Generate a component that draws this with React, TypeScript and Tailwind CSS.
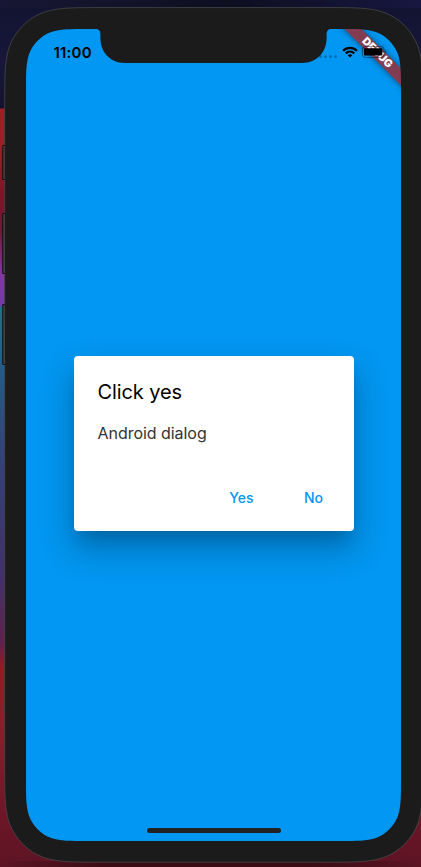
function smoothRect(x: number, y: number, w: number, h: number, r: number): string {
  const corner = (cx: number, cy: number, ax: number, ay: number, bx: number, by: number) => {
    const p = (a: number, b: number) => `${cx + ax * a * r + bx * b * r} ${cy + ay * a * r + by * b * r}`;
    return (
      `L${p(1.52866, 0)} C${p(1.08849, 0)} ${p(0.86841, 0)} ${p(0.63149, 0.07491)} ` +
      `C${p(0.37282, 0.16906)} ${p(0.16906, 0.37282)} ${p(0.07491, 0.63149)} ` +
      `C${p(0, 0.86841)} ${p(0, 1.08849)} ${p(0, 1.52866)} `
    );
  };
  return (
    `M${x + w / 2} ${y} ` +
    corner(x + w, y, -1, 0, 0, 1) +
    corner(x + w, y + h, 0, -1, -1, 0) +
    corner(x, y + h, 1, 0, 0, -1) +
    corner(x, y, 0, 1, 1, 0) +
    "Z"
  );
}

const BODY = smoothRect(4.7, 7.6, 418, 854.6, 62);
const SCREEN = smoothRect(26, 29, 375, 812, 40);
const NOTCH =
  "M94 28 V29 H95.5 C99 29 100.4 31 100.4 34.5 V38 C100.4 52 110 63 125 63 H302 C317 63 326.6 52 326.6 38 V34.5 C326.6 31 328 29 331.5 29 H333 V28 Z";

function Bezel() {
  return (
    <svg className="pointer-events-none absolute inset-0" width="421" height="867" viewBox="0 0 421 867">
      <path d={BODY + SCREEN} fill="#1b1b1b" fillRule="evenodd" />
      <path d={NOTCH} fill="#1b1b1b" />
      <path d={BODY} fill="none" stroke="#48484a" strokeWidth="0.8" />
      {[[145, 35], [213, 61], [304, 61]].map(([y, h]) => (
        <g key={y}>
          <rect x="2.2" y={y} width="3" height={h} rx="1" fill="#111111" />
          <rect x="3.4" y={y + 1} width="1.4" height={h - 2} fill="#4b4b4c" />
        </g>
      ))}
    </svg>
  );
}

function Wifi() {
  return (
    <svg width="16" height="12" viewBox="0 0 16 12" fill="none" stroke="#000" strokeWidth="2.2">
      <path d="M1.1 4.7 C5 .8 11 .8 14.9 4.7" />
      <path d="M3.7 7.4 C6.2 5 9.8 5 12.3 7.4" />
      <path d="M8 11.6 5.7 9.3 C7 8 9 8 10.3 9.3 Z" fill="#000" stroke="none" />
    </svg>
  );
}

function Battery() {
  return (
    <svg width="25" height="12" viewBox="0 0 25 12">
      <rect x="0.5" y="0.5" width="21.5" height="11" rx="3" fill="none" stroke="#000" strokeOpacity=".4" />
      <rect x="2" y="2.3" width="18.3" height="7.2" rx="0.8" fill="#000" />
      <path d="M23.2 4 C24.6 4.6 24.6 7.2 23.2 7.8 Z" fill="#000" fillOpacity=".4" />
    </svg>
  );
}

function StatusBar() {
  return (
    <header className="relative flex h-11 items-center justify-between pl-[27.5px] pr-[14px] pt-[2px]">
      <time className="text-[15px] font-semibold leading-none tracking-[0.2px] text-black">11:00</time>
      <div className="flex items-center">
        <div className="mr-[5px] mt-[8px] flex gap-[2px]">
          {[0, 1, 2, 3].map((i) => (
            <span key={i} className="size-[3px] rounded-full bg-black/25" />
          ))}
        </div>
        <Wifi />
        <span className="ml-[4px]">
          <Battery />
        </span>
      </div>
    </header>
  );
}

export default function App() {
  return (
    <main className="relative h-[867px] w-[421px] overflow-hidden bg-[linear-gradient(180deg,#121230_0px,#17173b_60px,#14132e_108px,#a11f25_109px,#9d1f25_145px,#7b1527_195px,#701735_230px,#8038a0_275px,#743aa3_306px,#207381_307px,#245b86_370px,#353f76_470px,#43306a_580px,#63204c_645px,#951b21_668px,#85202b_730px,#6b1627_820px,#5c1423_867px)] pl-[26px] pt-[29px] font-[Inter,sans-serif]">
      <div className="absolute inset-x-0 top-0 h-[8px] bg-[linear-gradient(90deg,#171735_0%,#111126_40%,#0e0e21_55%,#171741_100%)]" />
      <div className="absolute inset-x-0 bottom-0 h-[6px] bg-[linear-gradient(90deg,#66162400_0%,#3b0c14_25%,#3b0c14_75%,#66162400_100%)]" />
      <section className="relative flex h-[812px] w-[375px] flex-col overflow-hidden bg-[#0297f2]">
        <div className="absolute left-[291.25px] top-[17.75px] flex h-[12px] w-[120px] rotate-45 items-center justify-center bg-[#833d52] text-[10.8px] font-black leading-none text-white shadow-[0_0_6px_rgba(0,0,0,0.5)]">
          DEBUG
        </div>
        <StatusBar />
        <div className="flex flex-1 items-center justify-center pb-[28px]">
          <div role="dialog" className="flex h-[175px] w-[280px] flex-col rounded-[4px] bg-white shadow-[0_11px_15px_-7px_rgba(0,0,0,0.14),0_17px_32px_2px_rgba(0,0,0,0.25)]">
            <h1 className="pl-6 pt-6 text-[20px] font-normal leading-6 tracking-[-0.1px] text-black">Click yes</h1>
            <p className="pl-6 pt-[19px] text-[16px] leading-5 tracking-[-0.04px] text-[#333]">Android dialog</p>
            <div className="mt-auto flex justify-end pb-[9px] pr-2 text-[14px] font-medium text-[#0297f2]">
              <button className="mr-2 h-12 w-16">Yes</button>
              <button className="h-12 w-16">No</button>
            </div>
          </div>
        </div>
        <div className="absolute bottom-[8px] left-[121px] h-[5px] w-[134px] rounded-full bg-[#222222]" />
      </section>
      <Bezel />
    </main>
  );
}
